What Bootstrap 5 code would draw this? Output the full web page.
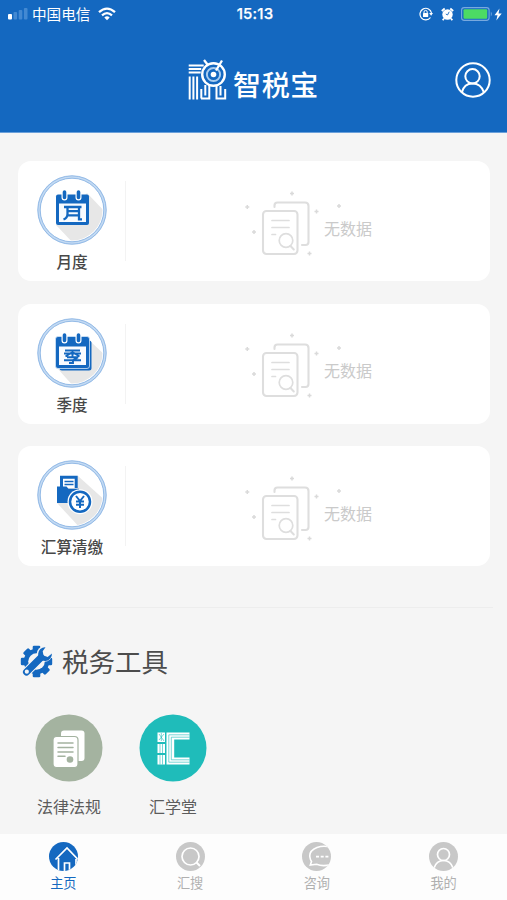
<!DOCTYPE html>
<html lang="zh-CN">
<head>
<meta charset="utf-8">
<meta name="viewport" content="width=device-width, initial-scale=1">
<title>智税宝</title>
<link href="https://cdn.jsdelivr.net/npm/bootstrap@5.3.0/dist/css/bootstrap.min.css" rel="stylesheet">
<style>
  :root { --brand: #1468c0; }
  body { background: #f5f5f5; font-family: "Liberation Sans", "Noto Sans CJK SC", sans-serif; color: #4c4c4c; }
  svg { display: block; flex: none; }
  .app { height: 900px; overflow: hidden; }
  .topbar { background: var(--brand); height: 133px; border-bottom: 1px solid #6ba0da; color: #fff; }
  .status { height: 28px; padding: 0 5px 0 8px; }
  .carrier { font: 14.6px/28px "Noto Sans CJK SC", sans-serif; margin-left: 4px; }
  .clock { font: 500 15px/28px Inter, "Liberation Sans", sans-serif; letter-spacing: .2px; -webkit-text-stroke: .25px #fff; }
  .third { flex: 1 1 0; }
  .brandrow { height: 104px; padding: 0 16px; }
  .brandname { font: 500 28px/34px "Noto Sans CJK SC", sans-serif; letter-spacing: .7px; margin: 8px 0 0 6px; }
  .periods { padding: 28px 17px 0 18px; gap: 22.5px; }
  .period { height: 120px; border: 0; border-radius: 13px; }
  .kind { width: 108px; height: 120px; padding-top: 14px; }
  .divider { width: 1px; height: 80px; margin-left: -1px; background: #f3f3f3; }
  .kind-label { font: 500 15.6px/22px "Noto Sans CJK SC", sans-serif; color: #484848; margin-top: 5px; white-space: nowrap; }
  .nodata { font: 16px/24px "Noto Sans CJK SC", sans-serif; color: #cacaca; padding-top: 13px; }
  .nodata svg { margin: 0 -20px 8px 0; }
  .rule { height: 1px; background: #ededed; margin: 41px 14px 0 20px; }
  .tools-title { font: 26.5px/40px "Noto Sans CJK SC", sans-serif; color: #4c4c4c; margin: 0 0 0 9px; }
  .tools-head { padding: 33px 20px 0; }
  .tools { padding: 33px 17px 0; }
  .tool { width: 104px; font: 16px/24px "Noto Sans CJK SC", sans-serif; color: #5c5c5c; }
  .tool svg { margin-bottom: 12px; }
  .tabs { height: 66px; background: #fdfdfd; }
  .tabs .nav-link { padding: 8px 0 0; color: #b0b0b0; font: 13.2px/20px "Noto Sans CJK SC", sans-serif; display: flex; flex-direction: column; align-items: center; gap: 2px; }
  .tabs .nav-link.active { color: var(--brand); }
</style>
<script src="https://cdn.jsdelivr.net/npm/bootstrap@5.3.0/dist/js/bootstrap.bundle.min.js"></script>
</head>
<body>
<svg width="0" height="0" class="position-absolute" aria-hidden="true">
  <defs>
    <symbol id="ring" viewBox="0 0 70 70">
      <circle cx="35" cy="35" r="33" fill="#fff" stroke="#c3daf3" stroke-width="3"/>
      <circle cx="35" cy="35" r="34.2" fill="none" stroke="#84b0e2" stroke-width=".8"/>
      <circle cx="35" cy="35" r="31.8" fill="none" stroke="#84b0e2" stroke-width=".8"/>
    </symbol>
    <symbol id="empty" viewBox="0 0 100 66">
      <g fill="none" stroke="#dedede" stroke-width="2.1" stroke-linecap="round">
        <rect x="19" y="20" width="34.5" height="43" rx="3.5"/>
        <path d="M30.500 16v-1.500q0-3 3-3h27.500q3.500 0 3.500 3.500v36q0 3-3 3h-3.500"/>
        <path d="M28 29.500h17M28 36.500h17M28 43.500h3.500" stroke-width="1.700"/>
        <circle cx="42" cy="49.500" r="6.800" stroke-width="1.700"/><path d="M46.500 55l3.300 3.500" stroke-width="2"/>
      </g>
      <path d="M48 .5v4M46 2.500h4M3.300 14v4M1.300 16h4M95 13v4M93 15h4M72.500 18.500v4M70.500 20.500h4M10 39v4M8 41h4M65.500 60.500v4M63.500 62.500h4" stroke="#dadada" stroke-width="1.500"/>
    </symbol>
    <clipPath id="disc"><circle cx="14.500" cy="14.500" r="14.500"/></clipPath>
    <clipPath id="inner"><circle cx="35" cy="35" r="30.500"/></clipPath>
  </defs>
</svg>

<div class="app d-flex flex-column">
  <header class="topbar flex-shrink-0">
    <div class="status d-flex align-items-center">
      <div class="third d-flex align-items-center">
        <svg width="20" height="14" viewBox="0 0 20 14"><rect y="7" width="4" height="5.500" rx="1" fill="#fff"/><g fill="#4389d2"><rect x="5.500" y="5" width="3.600" height="7.500" rx="1"/><rect x="10.700" y="3" width="3.600" height="9.500" rx="1"/><rect x="15.900" y="1" width="3.600" height="11.500" rx="1"/></g></svg>
        <span class="carrier">中国电信</span>
        <svg class="ms-2" width="18" height="14" viewBox="0 0 18 14" fill="none" stroke="#fff" stroke-width="2.300"><path d="M1 5.200q8-7.200 16 0M4 8.300q5-4.400 10 0"/><path d="M6.300 10.500q2.700-2.300 5.400 0L9 13.300z" fill="#fff" stroke="none"/></svg>
      </div>
      <div class="clock">15:13</div>
      <div class="third d-flex align-items-center justify-content-end">
        <svg width="14" height="14" viewBox="0 0 14 14"><path d="M11.500 10.500A5.800 5.800 0 1 1 12.500 6" fill="none" stroke="#fff" stroke-width="1.200"/><path d="M10.200 6h3.800l-1.900 2.700z" fill="#fff"/><rect x="4" y="6" width="5.200" height="4" rx=".5" fill="#fff"/><path d="M5 6V5a1.600 1.600 0 0 1 3.200 0v1" fill="none" stroke="#fff"/></svg>
        <svg class="ms-2" width="13" height="14" viewBox="0 0 13 14"><circle cx="6.500" cy="7.500" r="5.200" fill="#fff"/><path d="M.8 4L3.700 1.500M12.200 4L9.300 1.500M3 11.500l-1.300 1.700M10 11.500l1.300 1.700" stroke="#fff" stroke-width="1.800"/><path d="M8.200 4.800L6.500 8 4.800 7" stroke="#1468c0" stroke-width=".9" fill="none"/></svg>
        <svg class="ms-1" width="36" height="14" viewBox="-2 0 34 14"><rect x=".6" y=".6" width="27.500" height="12.800" rx="2.600" fill="none" stroke="#78a9df" stroke-width="1.100"/><rect x="2.500" y="2.300" width="23.700" height="9.400" rx="1" fill="#4cdb64"/><path d="M29.800 4.500q2 2.500 0 5z" fill="#78a9df"/></svg>
        <svg width="8" height="13" viewBox="0 0 8 13"><path d="M5.500.5L.5 7.300h3L2.300 12.500 7.700 5.500H4.500z" fill="#fff"/></svg>
      </div>
    </div>
    <div class="brandrow d-flex align-items-center">
      <div class="third"></div>
      <div class="d-flex align-items-center">
        <svg width="39" height="42" viewBox="0 0 39 42" fill="none" stroke="#fff">
          <path d="M.7 6.500h15M.7 10h12.500M.7 13.500h12M1.700 17.500v23M5.400 17.500v23M9.100 17.500v23" stroke-width="2"/>
          <path d="M13.300 30v9.500M13 39.500h8.300V26M17.300 26v10.500M28.500 26v13.500h8.700V30M32.500 27v9.500" stroke-width="2"/>
          <circle cx="25.500" cy="15.500" r="11.300" fill="#1468c0" stroke-width="2.400"/>
          <circle cx="25.500" cy="15.500" r="6.600" stroke="#a8ccef" stroke-width="2"/>
          <circle cx="25.500" cy="15.500" r="2.800" fill="#fff" stroke="none"/>
          <path d="M28 11.500L34 1.500M16 1l3.500 4.500" stroke-width="2.300"/>
        </svg>
        <span class="brandname">智税宝</span>
      </div>
      <div class="third d-flex justify-content-end">
        <svg width="36" height="36" viewBox="0 0 36 36" fill="none" stroke="#fff" stroke-width="2"><circle cx="18" cy="18" r="16.700"/><circle cx="17.500" cy="14.300" r="7.200"/><path d="M6.800 30.500Q9 21.400 17.500 21.400T29 30.500"/></svg>
      </div>
    </div>
  </header>

  <main class="flex-grow-1 overflow-hidden">
    <section class="periods d-flex flex-column">
      <article class="card period flex-row align-items-center">
        <div class="kind d-flex flex-column align-items-center">
          <svg width="70" height="70" viewBox="0 0 70 70">
            <use href="#ring"/><path clip-path="url(#inner)" d="M50 18L70 39V70H38L19 50z" fill="#e7e7e7"/>
            <path d="M21 19.500h29a2 2 0 0 1 2 2V48a2 2 0 0 1-2 2H21a2 2 0 0 1-2-2V21.500a2 2 0 0 1 2-2z" fill="#1468c0"/><path d="M22 28.500h27V47H22z" fill="#f8fbff"/>
            <path d="M27.500 17v5.500M41.500 17v5.500" stroke="#fff" stroke-width="6" stroke-linecap="round"/><path d="M27.500 17v5.500M41.500 17v5.500" stroke="#1468c0" stroke-width="3.600" stroke-linecap="round"/>
            <path d="M27 32h17.500M30.500 32v7q0 4-4 5.500M30.500 36.200h11.500M30 40.300h12M42 32v12.300h3" fill="none" stroke="#1468c0" stroke-width="2.300"/>
          </svg>
          <div class="kind-label">月度</div>
        </div>
        <div class="divider"></div>
        <div class="flex-grow-1 d-flex align-items-center justify-content-center nodata"><svg width="100" height="66"><use href="#empty"/></svg><span>无数据</span></div>
      </article>
      <article class="card period flex-row align-items-center">
        <div class="kind d-flex flex-column align-items-center">
          <svg width="70" height="70" viewBox="0 0 70 70">
            <use href="#ring"/><path clip-path="url(#inner)" d="M52 22L70 39V70H38L21 51z" fill="#e7e7e7"/>
            <rect x="22.500" y="22.500" width="32" height="30" rx="2.500" fill="#1468c0"/>
            <path d="M21 18.500h29a2.500 2.500 0 0 1 2.500 2.500v27a2.500 2.500 0 0 1-2.500 2.500H21a2.500 2.500 0 0 1-2.500-2.500V21a2.500 2.500 0 0 1 2.500-2.500z" fill="#1468c0" stroke="#d2e4f7" stroke-width=".8"/><path d="M22 28.500h27V47H22z" fill="#f8fbff"/>
            <path d="M27.500 17v5.500M41.500 17v5.500" stroke="#fff" stroke-width="6" stroke-linecap="round"/><path d="M27.500 17v5.500M41.500 17v5.500" stroke="#1468c0" stroke-width="3.600" stroke-linecap="round"/>
            <path d="M28 32.500h15M27 35.500h17M35.500 32v6.500M35.500 34l-7 4.500M35.500 34l7 4.500M30 39.300h11l-5 2.700v3h-4M27 42.300h17" fill="none" stroke="#1468c0" stroke-width="1.900"/>
          </svg>
          <div class="kind-label">季度</div>
        </div>
        <div class="divider"></div>
        <div class="flex-grow-1 d-flex align-items-center justify-content-center nodata"><svg width="100" height="66"><use href="#empty"/></svg><span>无数据</span></div>
      </article>
      <article class="card period flex-row align-items-center">
        <div class="kind d-flex flex-column align-items-center">
          <svg width="70" height="70" viewBox="0 0 70 70">
            <use href="#ring"/><path clip-path="url(#inner)" d="M41 16L70 42V70H45L20 43z" fill="#e7e7e7"/>
            <path d="M24.500 28V17.300h14.700V28" fill="#fff" stroke="#1468c0" stroke-width="3"/><path d="M27.500 21.500h9M27.500 24.500h9" stroke="#1468c0" stroke-width="1.300"/>
            <path d="M20 26.500h9.500l2 2.300H42V43H20z" fill="#1468c0"/>
            <circle cx="43" cy="41.700" r="12.500" fill="#fff"/><circle cx="43" cy="41.700" r="10" fill="#fff" stroke="#1468c0" stroke-width="2.500"/>
            <path d="M39 36l4 5 4-5M43 41v7M39 41.500h8M39 44.700h8" fill="none" stroke="#1468c0" stroke-width="2"/>
          </svg>
          <div class="kind-label">汇算清缴</div>
        </div>
        <div class="divider"></div>
        <div class="flex-grow-1 d-flex align-items-center justify-content-center nodata"><svg width="100" height="66"><use href="#empty"/></svg><span>无数据</span></div>
      </article>
    </section>

    <div class="rule"></div>

    <section>
      <div class="tools-head d-flex align-items-center">
        <svg width="33" height="33" viewBox="0 0 33 33">
          <g fill="#1468c0"><g id="teeth"><rect x="12.700" y=".8" width="7.600" height="31.400" rx="1.300"/><rect x="12.700" y=".8" width="7.600" height="31.400" rx="1.300" transform="rotate(45 16.500 16.500)"/></g><use href="#teeth" transform="rotate(90 16.500 16.500)"/><circle cx="16.500" cy="16.500" r="12.700"/></g>
          <circle cx="16.500" cy="16.500" r="8.300" fill="#f5f5f5"/>
          <path d="M6.500 27L20 13.500" stroke="#f5f5f5" stroke-width="9" stroke-linecap="round"/><circle cx="24.500" cy="9" r="7.800" fill="#f5f5f5"/>
          <path d="M6.500 27L21 12.500" stroke="#1468c0" stroke-width="7" stroke-linecap="round"/>
          <path d="M25.500 2.300a6.900 6.900 0 1 0 6.400 6.300l-4.200 3.300-4.200-1.300-.8-4.300z" fill="#1468c0"/><circle cx="6.800" cy="26.700" r="2.100" fill="#f5f5f5"/>
        </svg>
        <h1 class="tools-title">税务工具</h1>
      </div>
      <div class="tools d-flex">
        <div class="tool d-flex flex-column align-items-center">
          <svg width="68" height="68" viewBox="0 0 68 68"><circle cx="34" cy="34" r="33.500" fill="#a4b3a0"/><rect x="26" y="16.500" width="23.500" height="30.500" rx="3" fill="#fff"/><rect x="18" y="22.500" width="25" height="31" rx="3.500" fill="#fff" stroke="#a4b3a0" stroke-width="1.200"/><path d="M23 29h15M23 33.500h15M23 38h15M23 42.300h7" stroke="#a4b3a0" stroke-width="1.500" stroke-linecap="round"/><circle cx="35" cy="45.500" r="3.300" fill="#a4b3a0"/></svg>
          法律法规
        </div>
        <div class="tool d-flex flex-column align-items-center">
          <svg width="68" height="68" viewBox="0 0 68 68"><circle cx="34" cy="34" r="33.500" fill="#1fbcba"/>
            <g fill="#fff"><rect x="18.500" y="18.500" width="7.500" height="9.500"/><rect x="18.500" y="30" width="7.500" height="9"/><rect x="18.500" y="41" width="7.500" height="9.500"/><path d="M27.500 18.500h23v7H35.200v18h15.300v7h-23z"/></g>
            <path d="M21 30v20.500M23.500 30v20.500M50.500 20.800H29.800v27.400h20.700M50.500 23.200H32.300v22.600h18.200M20 20l5 7M25 20l-5 6M22.300 19v8" fill="none" stroke="#1fbcba" stroke-width=".6"/></svg>
          汇学堂
        </div>
      </div>
    </section>
  </main>

  <nav class="tabs nav nav-fill flex-nowrap flex-shrink-0">
    <a class="nav-link nav-item w-25 active" href="#"><svg width="29" height="29" viewBox="0 0 29 29"><circle cx="14.500" cy="14.500" r="14.500" fill="#1468c0"/><g clip-path="url(#disc)" fill="none" stroke="#fff" stroke-width="1.700"><path d="M6.500 17.500L18 6l11 11.500M9.500 16v12M27 17v10M15.500 29v-8h5v8"/></g></svg>主页</a>
    <a class="nav-link nav-item w-25" href="#"><svg width="29" height="29" viewBox="0 0 29 29"><circle cx="14.500" cy="14.500" r="14.500" fill="#c8c8c8"/><circle cx="14.500" cy="14.500" r="8.500" fill="none" stroke="#fff" stroke-width="1.700"/><path d="M20.500 20.500l3.500 3.500" stroke="#fff" stroke-width="2"/></svg>汇搜</a>
    <a class="nav-link nav-item w-25" href="#"><svg width="29" height="29" viewBox="0 0 29 29"><circle cx="14.500" cy="14.500" r="14.500" fill="#c8c8c8"/><g clip-path="url(#disc)"><path d="M29 5.500Q22 3 15 5.500 6.500 9 8 15.500q.3 2.200 1.500 4L8.300 23l6.200-.7q7 2.700 14.500 0" fill="none" stroke="#fff" stroke-width="1.600"/><path d="M14 14.700h3M18.700 14.700h3M23.400 14.700h3" stroke="#fff" stroke-width="1.700"/></g></svg>咨询</a>
    <a class="nav-link nav-item w-25" href="#"><svg width="29" height="29" viewBox="0 0 29 29"><circle cx="14.500" cy="14.500" r="14.500" fill="#c8c8c8"/><g clip-path="url(#disc)" fill="none" stroke="#fff" stroke-width="1.700"><circle cx="14.500" cy="12.500" r="6"/><path d="M5 26q2.500-7.500 9.500-7.500T24 26"/></g></svg>我的</a>
  </nav>
</div>
</body>
</html>
